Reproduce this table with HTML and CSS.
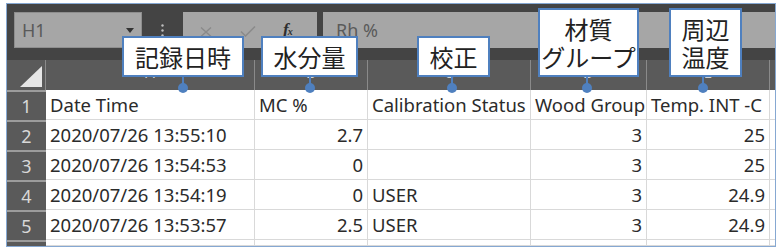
FILE: index.html
```html
<!DOCTYPE html>
<html lang="ja">
<head>
<meta charset="utf-8">
<title>Sheet</title>
<link rel="stylesheet" href="styles.css">
</head>
<body>
<div class="frame">
  <div class="toolbar">
    <div class="namebox"><span>H1</span><svg class="drop" width="8" height="5" viewBox="0 0 8 5"><path d="M0 0H8L4 5Z" fill="#333"/></svg></div>
    <div class="grip"><svg width="3" height="13" viewBox="0 0 3 13"><circle cx="1.5" cy="1.5" r="1.2" fill="#bdbdbd"/><circle cx="1.5" cy="6.5" r="1.2" fill="#bdbdbd"/><circle cx="1.5" cy="11.5" r="1.2" fill="#bdbdbd"/></svg></div>
    <div class="fbtns">
      <svg class="btn-x" width="12" height="10" viewBox="0 0 12 10"><path d="M1 0.5L11 9.5M11 0.5L1 9.5" stroke="#8a8a8a" stroke-width="1.4" fill="none"/></svg>
      <svg class="btn-ok" width="16" height="11" viewBox="0 0 16 11"><path d="M1 5.5L5.5 10L15 0.5" stroke="#8a8a8a" stroke-width="1.5" fill="none"/></svg>
      <span class="fx"><span class="f">f</span><span class="x">x</span></span>
    </div>
    <div class="finput">Rh %</div>
  </div>
  <div class="sheet">
    <div class="corner"><svg width="22" height="21" viewBox="0 0 22 21"><path d="M0 21L22 0V21Z" fill="#e6e6e6"/></svg></div>
    <div class="ch">A</div><div class="ch">B</div><div class="ch">C</div><div class="ch">D</div><div class="ch">E</div><div class="ch"></div>

    <div class="rh">1</div><div class="cell">Date Time</div><div class="cell">MC %</div><div class="cell">Calibration Status</div><div class="cell">Wood Group</div><div class="cell">Temp. INT -C</div><div class="cell"></div>
    <div class="rh">2</div><div class="cell">2020/07/26 13:55:10</div><div class="cell num">2.7</div><div class="cell"></div><div class="cell num">3</div><div class="cell num">25</div><div class="cell"></div>
    <div class="rh">3</div><div class="cell">2020/07/26 13:54:53</div><div class="cell num">0</div><div class="cell"></div><div class="cell num">3</div><div class="cell num">25</div><div class="cell"></div>
    <div class="rh">4</div><div class="cell">2020/07/26 13:54:19</div><div class="cell num">0</div><div class="cell">USER</div><div class="cell num">3</div><div class="cell num">24.9</div><div class="cell"></div>
    <div class="rh">5</div><div class="cell">2020/07/26 13:53:57</div><div class="cell num">2.5</div><div class="cell">USER</div><div class="cell num">3</div><div class="cell num">24.9</div><div class="cell"></div>
    <div class="rh"></div><div class="cell"></div><div class="cell"></div><div class="cell"></div><div class="cell"></div><div class="cell"></div><div class="cell"></div>
  </div>

  <div class="callout c1">記録日時</div>
  <div class="callout c2">水分量</div>
  <div class="callout c3">校正</div>
  <div class="callout c4">材質<br>グループ</div>
  <div class="callout c5">周辺<br>温度</div>
  <div class="pin p1"></div>
  <div class="pin p2"></div>
  <div class="pin p3"></div>
  <div class="pin p4"></div>
  <div class="pin p5"></div>
</div>
</body>
</html>
```
FILE: styles.css
```css
* { box-sizing: border-box; }
html, body { margin: 0; padding: 0; background: #fff; }
body {
  width: 780px;
  height: 251px;
  overflow: hidden;
  font-family: "Noto Sans", "Noto Sans CJK JP", sans-serif;
}
.frame {
  position: relative;
  margin: 3px 0 0 6px;
  width: 770px;
  height: 244px;
  border: 1px solid #86a8d2;
  background: #444444;
  overflow: hidden;
}
.toolbar {
  display: flex;
  height: 56px;
  padding: 8px 0 12px 7px;
}
.namebox {
  width: 128px;
  background: #a6a6a6;
  border: 1px solid #8e8e8e;
  display: flex;
  align-items: center;
  justify-content: space-between;
  padding: 0 7px 0 7px;
  color: #5a5a5a;
  font-size: 18px;
}
.drop { margin-top: 1px; }
.grip {
  width: 41px;
  display: flex;
  align-items: center;
  justify-content: center;
}
.fbtns {
  width: 134px;
  background: #a6a6a6;
  display: flex;
  align-items: center;
  padding-left: 17px;
}
.btn-x { margin-top: 4px; }
.btn-ok { margin-left: 28px; margin-top: 3px; }
.fx {
  margin-left: 27px;
  font-family: "Liberation Serif", serif;
  font-style: italic;
  color: #2e2e2e;
  display: flex;
  align-items: baseline;
}
.fx .f { font-size: 17px; font-weight: bold; }
.fx .x { font-size: 10px; font-weight: bold; margin-left: -1px; }
.finput {
  flex: 1;
  margin-left: 6px;
  background: #a6a6a6;
  color: #5a5a5a;
  font-size: 18px;
  display: flex;
  align-items: center;
  padding-left: 13px;
}
.sheet {
  display: grid;
  grid-template-columns: 39px 209px 113px 163px 116px 123px 1fr;
  grid-template-rows: repeat(6, 30px) 6px;
}
.corner {
  background: #5a5a5a;
  border-right: 1px solid #8a8a8a;
  display: flex;
  align-items: flex-end;
  justify-content: flex-end;
  padding: 0 3px 3px 0;
}
.ch {
  background: #5a5a5a;
  border-right: 1px solid #8a8a8a;
  color: #d4d4d4;
  font-size: 15px;
  display: flex;
  align-items: center;
  justify-content: center;
  padding-bottom: 6px;
  overflow: hidden;
}
.rh {
  background: #5a5a5a;
  border-top: 2px solid #9c9c9c;
  color: #d8d8d8;
  font-size: 18px;
  display: flex;
  align-items: center;
  justify-content: center;
}
.cell {
  background: #fff;
  border-right: 1px solid #d9d9d9;
  border-bottom: 1px solid #d9d9d9;
  color: #2b2b2b;
  font-size: 18.5px;
  display: flex;
  align-items: center;
  padding: 0 4px;
  white-space: nowrap;
  overflow: hidden;
}
.num { justify-content: flex-end; }

.callout {
  position: absolute;
  background: #fff;
  border: 2px solid #4f80bf;
  font-family: "Noto Sans CJK JP", sans-serif;
  font-size: 24px;
  line-height: 28px;
  color: #222;
  display: flex;
  align-items: center;
  justify-content: center;
  text-align: center;
  z-index: 2;
}
.c1 { left: 115px; top: 32px; width: 122px; height: 41px; }
.c2 { left: 254px; top: 32px; width: 97px; height: 41px; }
.c3 { left: 410px; top: 32px; width: 73px; height: 41px; }
.c4 { left: 531px; top: 4px; width: 101px; height: 69px; }
.c5 { left: 662px; top: 4px; width: 73px; height: 69px; }

.pin {
  position: absolute;
  top: 72px;
  width: 10px;
  height: 17px;
  z-index: 1;
}
.pin::before {
  content: "";
  position: absolute;
  left: 4px;
  top: 0;
  width: 2px;
  height: 10px;
  background: #4f80bf;
}
.pin::after {
  content: "";
  position: absolute;
  left: 0;
  top: 7px;
  width: 10px;
  height: 10px;
  border-radius: 50%;
  background: #4f80bf;
}
.p1 { left: 171px; }
.p2 { left: 298px; }
.p3 { left: 440px; }
.p4 { left: 575px; }
.p5 { left: 691px; }
```
